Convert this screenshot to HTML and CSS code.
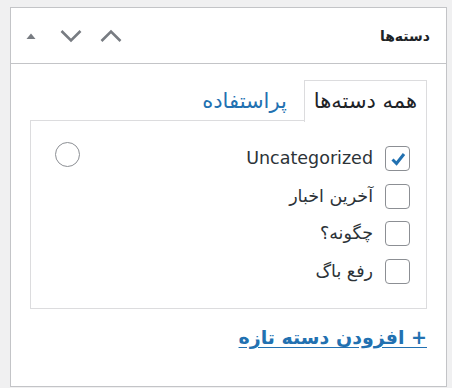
FILE: index.html
```html
<!DOCTYPE html>
<html lang="fa" dir="rtl">
<head>
<meta charset="utf-8">
<link rel="stylesheet" href="styles.css">
</head>
<body>
<div class="postbox">
  <div class="postbox-header">
    <h2 class="hndle">دسته‌ها</h2>
    <div class="handle-actions">
      <button class="hbtn" aria-label="up">
        <svg width="24" height="20" viewBox="0 0 24 20"><path d="M2.5 15 L12 5.5 L21.5 15" fill="none" stroke="#787c82" stroke-width="2.6"/></svg>
      </button>
      <button class="hbtn" aria-label="down">
        <svg width="24" height="20" viewBox="0 0 24 20"><path d="M2.5 5 L12 14.5 L21.5 5" fill="none" stroke="#787c82" stroke-width="2.6"/></svg>
      </button>
      <button class="hbtn" aria-label="toggle">
        <svg width="20" height="20" viewBox="0 0 20 20"><path d="M5.5 13 L10 7.5 L14.5 13 Z" fill="#787c82"/></svg>
      </button>
    </div>
  </div>
  <div class="inside">
    <ul class="tabs">
      <li class="tab active">همه دسته‌ها</li>
      <li class="tab"><a href="#">پراستفاده</a></li>
    </ul>
    <div class="panel">
      <ul class="checklist">
        <li><label><span class="cb checked"><svg width="20" height="20" viewBox="0 0 20 20"><path d="M4.5 10.5 L8.5 14.5 L16 5" fill="none" stroke="#2271b1" stroke-width="3"/></svg></span>Uncategorized</label></li>
        <li><label><span class="cb"></span>آخرین اخبار</label></li>
        <li><label><span class="cb"></span>چگونه؟</label></li>
        <li><label><span class="cb"></span>رفع باگ</label></li>
      </ul>
      <span class="radio"></span>
    </div>
    <p class="add"><a href="#">+ افزودن دسته تازه</a></p>
  </div>
</div>
</body>
</html>
```
FILE: styles.css
```css
html, body {
  margin: 0;
  padding: 0;
  background: #f0f0f1;
}
body {
  padding: 7px 5px 0 10px;
  font-family: "DejaVu Sans", "Liberation Sans", sans-serif;
  color: #1d2327;
}
.postbox {
  background: #fff;
  border: 1px solid #c3c4c7;
  height: 380px;
  box-sizing: border-box;
}
.postbox-header {
  display: flex;
  align-items: center;
  justify-content: space-between;
  height: 55px;
  border-bottom: 1px solid #c3c4c7;
  padding: 0 16px 0 0;
}
.hndle {
  margin: 0;
  font-size: 14px;
  font-weight: 600;
}
.handle-actions {
  display: flex;
  flex-direction: row;
}
.hbtn {
  border: 0;
  background: none;
  padding: 0;
  width: 40px;
  height: 36px;
  display: flex;
  align-items: center;
  justify-content: center;
}
.inside {
  padding: 16px 19px 0 19px;
}
.tabs {
  list-style: none;
  margin: 0;
  padding: 0;
  display: flex;
  gap: 7px;
  height: 40px;
}
.tab {
  font-size: 21px;
  padding: 0 9px;
  line-height: 40px;
  border: 1px solid transparent;
  border-bottom: 0;
}
.tab.active {
  border-color: #dcdcde;
  background: #fff;
  position: relative;
  z-index: 1;
  height: 41px;
}
.tab a {
  color: #2271b1;
  text-decoration: none;
}
.panel {
  border: 1px solid #dcdcde;
  height: 189px;
  box-sizing: border-box;
  display: flex;
  justify-content: space-between;
  align-items: flex-start;
  padding: 25px 16px 0 24px;
}
.checklist {
  list-style: none;
  margin: 0;
  padding: 0;
  display: flex;
  flex-direction: column;
  gap: 12.5px;
}
.checklist li label {
  display: flex;
  align-items: center;
  gap: 12px;
  font-size: 17.5px;
  line-height: 25px;
  color: #2c3338;
}
.cb {
  width: 25px;
  height: 25px;
  box-sizing: border-box;
  border: 1px solid #8c8f94;
  border-radius: 4px;
  display: flex;
  align-items: center;
  justify-content: center;
}
.radio {
  width: 25px;
  height: 25px;
  box-sizing: border-box;
  border: 1px solid #8c8f94;
  border-radius: 50%;
  margin-top: -4px;
}
.add {
  margin: 17px 0 0 0;
  font-size: 19px;
  font-weight: 700;
}
.add a {
  color: #2271b1;
  text-decoration: underline;
  text-underline-offset: 3px;
}
```
